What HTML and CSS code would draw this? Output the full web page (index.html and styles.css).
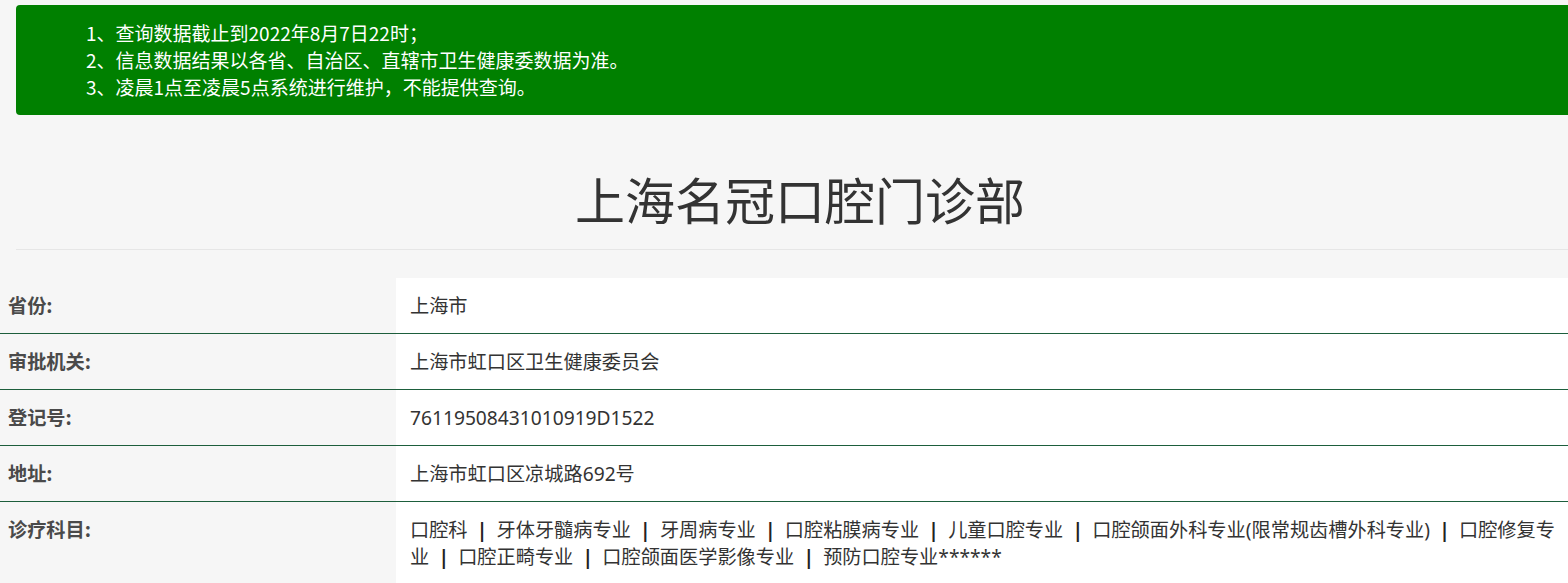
FILE: index.html
```html
<!DOCTYPE html>
<html lang="zh-CN">
<head>
<meta charset="utf-8">
<title>上海名冠口腔门诊部</title>
<link rel="stylesheet" href="styles.css">
</head>
<body>
<div class="wrap">
  <div class="notice">
    <p>1、查询数据截止到2022年8月7日22时；</p>
    <p>2、信息数据结果以各省、自治区、直辖市卫生健康委数据为准。</p>
    <p>3、凌晨1点至凌晨5点系统进行维护，不能提供查询。</p>
  </div>
  <h1 class="title">上海名冠口腔门诊部</h1>
</div>
<table class="info">
  <tr><th>省份:</th><td>上海市</td></tr>
  <tr><th>审批机关:</th><td>上海市虹口区卫生健康委员会</td></tr>
  <tr><th>登记号:</th><td>76119508431010919D1522</td></tr>
  <tr><th>地址:</th><td>上海市虹口区凉城路692号</td></tr>
  <tr><th>诊疗科目:</th><td>口腔科<span class="sep">|</span>牙体牙髓病专业<span class="sep">|</span>牙周病专业<span class="sep">|</span>口腔粘膜病专业<span class="sep">|</span>儿童口腔专业<span class="sep">|</span>口腔颌面外科专业(限常规齿槽外科专业)<span class="sep">|</span>口腔修复专业<span class="sep">|</span>口腔正畸专业<span class="sep">|</span>口腔颌面医学影像专业<span class="sep">|</span>预防口腔专业******</td></tr>
</table>
</body>
</html>
```
FILE: styles.css
```css
html, body {
  margin: 0;
  padding: 0;
  overflow-x: hidden;
  background: #f6f6f6;
  font-family: "Noto Sans CJK SC", "Microsoft YaHei", sans-serif;
}
.wrap {
  width: 1568px;
  margin-left: 16px;
  padding-top: 5px;
}
.notice {
  background: #008000;
  border-radius: 4px;
  padding: 14px 0 15px 70px;
  color: #ffffff;
  font-size: 19px;
  line-height: 27px;
}
.notice p {
  margin: 0;
}
.title {
  margin: 0;
  height: 135px;
  line-height: 166px;
  text-align: center;
  font-size: 50px;
  font-weight: normal;
  color: #333333;
  border-bottom: 1px solid #e6e6e6;
  box-sizing: border-box;
}
.info {
  margin-top: 28px;
  width: 1568px;
  border-collapse: collapse;
  font-size: 19.2px;
  line-height: 27px;
}
.info tr + tr {
  border-top: 1px solid #1d5e3c;
}
.info th {
  width: 396px;
  box-sizing: border-box;
  text-align: left;
  vertical-align: top;
  padding: 14px 8px;
  font-weight: bold;
  color: #4a4a4a;
}
.info td {
  background: #ffffff;
  vertical-align: top;
  padding: 14px 6px 14px 14px;
  color: #333333;
  font-family: "Noto Sans", "Noto Sans CJK SC", sans-serif;
}
.sep {
  display: inline-block;
  width: 19px;
  margin: 0 5px;
  text-align: center;
  font-weight: bold;
  color: #222222;
}
```
